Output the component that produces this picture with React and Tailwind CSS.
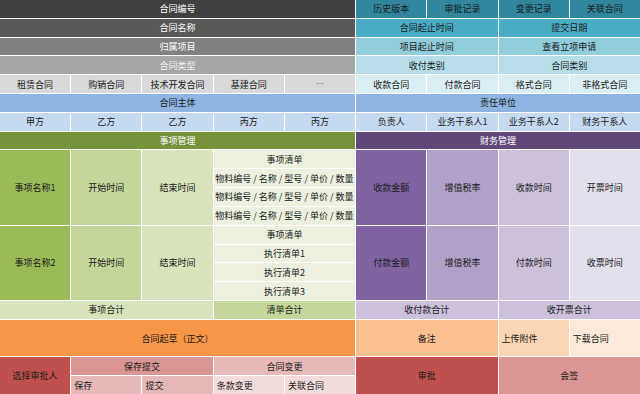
function Cell({ children, className = "", left = false }) {
  return (
    <div
      className={`flex items-center overflow-hidden whitespace-nowrap ${
        left ? "justify-start pl-[3px]" : "justify-center"
      } ${className}`}
    >
      {children}
    </div>
  );
}

const MATERIAL = "物料编号 / 名称 / 型号 / 单价 / 数量";

export default function App() {
  return (
    <div className="w-[640px] h-[394px] bg-white font-['Noto_Sans_CJK_SC','Noto_Sans',sans-serif] text-[9px] leading-none text-[#1a1a1a]">
      <div className="grid h-full grid-cols-9 grid-rows-[repeat(21,minmax(0,1fr))] gap-px bg-white">
        {/* 合同基础信息 */}
        <Cell className="col-span-5 bg-[#404040] text-white">合同编号</Cell>
        <Cell className="bg-[#31859c]">历史版本</Cell>
        <Cell className="bg-[#31859c]">审批记录</Cell>
        <Cell className="bg-[#31859c]">变更记录</Cell>
        <Cell className="bg-[#31859c]">关联合同</Cell>

        <Cell className="col-span-5 bg-[#595959] text-white">合同名称</Cell>
        <Cell className="col-span-2 bg-[#4bacc6]">合同起止时间</Cell>
        <Cell className="col-span-2 bg-[#4bacc6]">提交日期</Cell>

        <Cell className="col-span-5 bg-[#808080] text-white">归属项目</Cell>
        <Cell className="col-span-2 bg-[#92cddc]">项目起止时间</Cell>
        <Cell className="col-span-2 bg-[#92cddc]">查看立项申请</Cell>

        <Cell className="col-span-5 bg-[#a6a6a6] text-[#f2f2f2]">合同类型</Cell>
        <Cell className="col-span-2 bg-[#b7dee8]">收付类别</Cell>
        <Cell className="col-span-2 bg-[#b7dee8]">合同类别</Cell>

        {["租赁合同", "购销合同", "技术开发合同", "基建合同"].map((t) => (
          <Cell key={t} className="bg-[#d9d9d9]">
            {t}
          </Cell>
        ))}
        <Cell className="bg-[#d9d9d9] text-[#555]">
          <span className="font-['DejaVu_Sans',sans-serif] text-[9px]">···</span>
        </Cell>
        {["收款合同", "付款合同", "格式合同", "非格式合同"].map((t) => (
          <Cell key={t} className="bg-[#daeef3]">
            {t}
          </Cell>
        ))}

        {/* 主体 */}
        <Cell className="col-span-5 bg-[#8db4e2]">合同主体</Cell>
        <Cell className="col-span-4 bg-[#8db4e2]">责任单位</Cell>
        {["甲方", "乙方", "乙方", "丙方", "丙方", "负责人", "业务干系人1", "业务干系人2", "财务干系人"].map(
          (t, i) => (
            <Cell key={"p" + i} className="bg-[#c5d9f1]">
              {t}
            </Cell>
          )
        )}

        {/* 事项 / 财务 */}
        <Cell className="col-span-5 bg-[#76933c] text-white">事项管理</Cell>
        <Cell className="col-span-4 bg-[#60497a] text-white">财务管理</Cell>

        <Cell className="row-span-4 bg-[#9bbb59]">事项名称1</Cell>
        <Cell className="row-span-4 bg-[#c4d79b]">开始时间</Cell>
        <Cell className="row-span-4 bg-[#d8e4bc]">结束时间</Cell>
        <Cell className="col-span-2 bg-[#ebf1de]">事项清单</Cell>
        <Cell className="row-span-4 bg-[#8064a2]">收款金额</Cell>
        <Cell className="row-span-4 bg-[#b1a0c7]">增值税率</Cell>
        <Cell className="row-span-4 bg-[#ccc0da]">收款时间</Cell>
        <Cell className="row-span-4 bg-[#e4dfec]">开票时间</Cell>
        <Cell className="col-span-2 bg-[#ebf1de]">{MATERIAL}</Cell>
        <Cell className="col-span-2 bg-[#ebf1de]">{MATERIAL}</Cell>
        <Cell className="col-span-2 bg-[#ebf1de]">{MATERIAL}</Cell>

        <Cell className="row-span-4 bg-[#9bbb59]">事项名称2</Cell>
        <Cell className="row-span-4 bg-[#c4d79b]">开始时间</Cell>
        <Cell className="row-span-4 bg-[#d8e4bc]">结束时间</Cell>
        <Cell className="col-span-2 bg-[#ebf1de]">事项清单</Cell>
        <Cell className="row-span-4 bg-[#8064a2]">付款金额</Cell>
        <Cell className="row-span-4 bg-[#b1a0c7]">增值税率</Cell>
        <Cell className="row-span-4 bg-[#ccc0da]">付款时间</Cell>
        <Cell className="row-span-4 bg-[#e4dfec]">收票时间</Cell>
        <Cell className="col-span-2 bg-[#ebf1de]">执行清单1</Cell>
        <Cell className="col-span-2 bg-[#ebf1de]">执行清单2</Cell>
        <Cell className="col-span-2 bg-[#ebf1de]">执行清单3</Cell>

        <Cell className="col-span-3 bg-[#d8e4bc]">事项合计</Cell>
        <Cell className="col-span-2 bg-[#c4d79b]">清单合计</Cell>
        <Cell className="col-span-2 bg-[#ccc0da]">收付款合计</Cell>
        <Cell className="col-span-2 bg-[#ccc0da]">收开票合计</Cell>

        {/* 起草 */}
        <Cell className="col-span-5 row-span-2 bg-[#f79646]">合同起草（正文）</Cell>
        <Cell className="col-span-2 row-span-2 bg-[#fabf8f]">备注</Cell>
        <Cell left className="row-span-2 bg-[#fcd5b4]">上传附件</Cell>
        <Cell left className="row-span-2 bg-[#fde9d9]">下载合同</Cell>

        {/* 审批 */}
        <Cell className="row-span-2 bg-[#c0504d]">选择审批人</Cell>
        <Cell className="col-span-2 bg-[#da9694]">保存提交</Cell>
        <Cell className="col-span-2 bg-[#e6b8b7]">合同变更</Cell>
        <Cell className="col-span-2 row-span-2 bg-[#c0504d]">审批</Cell>
        <Cell className="col-span-2 row-span-2 bg-[#da9694]">会签</Cell>
        <Cell left className="bg-[#e6b8b7]">保存</Cell>
        <Cell left className="bg-[#e6b8b7]">提交</Cell>
        <Cell left className="bg-[#f2dcdb]">条款变更</Cell>
        <Cell left className="bg-[#f2dcdb]">关联合同</Cell>
      </div>
    </div>
  );
}
